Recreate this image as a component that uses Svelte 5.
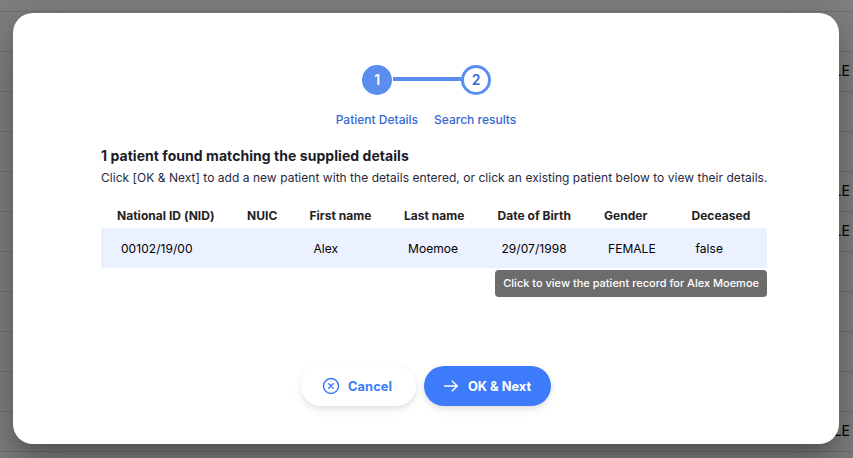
<script>
  const columns = [
    { label: 'National ID (NID)', value: '00102/19/00', width: 130 },
    { label: 'NUIC', value: '', width: 62.5 },
    { label: 'First name', value: 'Alex', width: 94.5 },
    { label: 'Last name', value: 'Moemoe', width: 93.5 },
    { label: 'Date of Birth', value: '29/07/1998', width: 106.5 },
    { label: 'Gender', value: 'FEMALE', width: 87.5 },
    { label: 'Deceased', value: 'false', width: 91.5 }
  ];
  const rows = ['', '', 'FEMALE', '', '', 'FEMALE', 'FEMALE', '', '', '', '', 'FEMALE', ''];
</script>

<div class="screen">
  <div class="page" aria-hidden="true">
    {#each rows as gender}
      <div class="page-row">{gender}</div>
    {/each}
  </div>
  <div class="backdrop">
    <div class="dialog" role="dialog">
      <div class="stepper">
        <div class="track">
          <span class="dot current">1</span>
          <span class="line"></span>
          <span class="dot">2</span>
        </div>
        <div class="labels"><span>Patient Details</span><span>Search results</span></div>
      </div>
      <div class="results">
        <h1>1 patient found matching the supplied details</h1>
        <p>Click [OK &amp; Next] to add a new patient with the details entered, or click an existing patient below to view their details.</p>
        <table>
          <colgroup>
            {#each columns as c}<col style="width:{c.width}px" />{/each}
          </colgroup>
          <thead>
            <tr>{#each columns as c}<th>{c.label}</th>{/each}</tr>
          </thead>
          <tbody>
            <tr>{#each columns as c}<td>{c.value}</td>{/each}</tr>
          </tbody>
        </table>
        <div class="tooltip" role="tooltip">Click to view the patient record for Alex Moemoe</div>
      </div>
      <div class="actions">
        <button class="cancel">
          <svg width="18" height="18" viewBox="0 0 18 18"><circle cx="9" cy="9" r="7.5" /><path d="M6.8 6.8l4.4 4.4M11.2 6.8l-4.4 4.4" /></svg>
          <span>Cancel</span>
        </button>
        <button class="next">
          <svg width="16" height="16" viewBox="0 0 16 16"><path d="M1.7 8h12.6M9.3 3.2l5 4.8-5 4.8" /></svg>
          <span>OK &amp; Next</span>
        </button>
      </div>
    </div>
  </div>
</div>

<style>
  .screen {
    position: relative;
    width: 853px;
    height: 458px;
    overflow: hidden;
    background: #fff;
    font-family: Inter, 'Liberation Sans', sans-serif;
    box-sizing: border-box;
  }
  .page-row {
    height: 40px;
    box-sizing: border-box;
    border-bottom: 1px solid #e0e0e0;
    padding-right: 3px;
    text-align: right;
    font-size: 14px;
    line-height: 37px;
    color: #000;
  }
  .page-row:first-child { height: 12px; }
  .backdrop {
    position: absolute;
    inset: 0;
    box-sizing: border-box;
    padding: 13px 14px 14px 13px;
    background: rgba(0, 0, 0, 0.5);
  }
  .dialog {
    display: flex;
    flex-direction: column;
    align-items: center;
    box-sizing: border-box;
    height: 431px;
    padding: 52px 0 38px;
    border-radius: 20px;
    background: #fff;
    box-shadow: 0 11px 15px -7px rgba(0, 0, 0, 0.2), 0 24px 38px 3px rgba(0, 0, 0, 0.14), 0 9px 46px 8px rgba(0, 0, 0, 0.12);
  }
  .stepper { display: flex; flex-direction: column; align-items: center; }
  .track { display: flex; align-items: center; height: 30px; padding-left: 1.4px; }
  .dot {
    box-sizing: border-box;
    width: 30px;
    height: 30px;
    border: 3px solid #5b8def;
    border-radius: 50%;
    text-align: center;
    font-size: 14px;
    font-weight: 600;
    line-height: 24px;
    color: #3568d4;
  }
  .current { background: #5b8def; color: #fff; }
  .line { width: 68px; height: 4px; margin: 0 0 2px 1px; background: #5b8def; }
  .labels {
    display: flex;
    gap: 16px;
    margin-top: 15px;
    font-size: 12px;
    font-weight: 500;
    line-height: 20px;
    color: #3568d4;
  }
  .results { position: relative; width: 666px; margin-left: 16px; }
  h1 {
    margin: 16px 0 0;
    font-size: 14px;
    font-weight: 700;
    line-height: 20px;
    letter-spacing: 0.05px;
    color: #1c1c28;
  }
  p { margin: 2px 0 0; font-size: 12px; line-height: 20px; letter-spacing: 0.034px; color: #28293d; white-space: nowrap; }
  table { width: 666px; margin-top: 16px; table-layout: fixed; border-collapse: collapse; font-size: 12px; text-align: left; white-space: nowrap; }
  th { height: 24px; padding: 0 0 0 16px; font-weight: 700; line-height: 24px; letter-spacing: 0.03px; color: #222; }
  td { height: 40px; padding: 0 0 0 20px; background: #ebf1ff; letter-spacing: 0.05px; color: #000; }
  .tooltip {
    position: absolute;
    right: 0;
    top: 140px;
    box-sizing: border-box;
    height: 27px;
    padding: 0 8px;
    border-radius: 4px;
    background: #6c6c6c;
    color: #fff;
    font-size: 11px;
    font-weight: 500;
    line-height: 26px;
    white-space: nowrap;
  }
  .actions { display: flex; gap: 8px; margin-top: auto; }
  button {
    display: flex;
    align-items: center;
    height: 40px;
    box-sizing: border-box;
    border: 0;
    border-radius: 20px;
    font-family: inherit;
    font-size: 12.8px;
    font-weight: 700;
    box-shadow: 0 2px 4px rgba(40, 41, 61, 0.06), 0 4px 8px rgba(96, 97, 112, 0.12);
  }
  .cancel { width: 115px; padding: 0 0 0 21px; gap: 8px; letter-spacing: 0.1px; background: #fff; color: #3e7bfa; }
  .next { width: 127px; padding: 0 0 0 19px; gap: 9px; background: #3e7bfa; color: #fff; }
  svg { flex: none; fill: none; stroke: currentColor; stroke-width: 1.5; stroke-linecap: round; stroke-linejoin: round; }
</style>
